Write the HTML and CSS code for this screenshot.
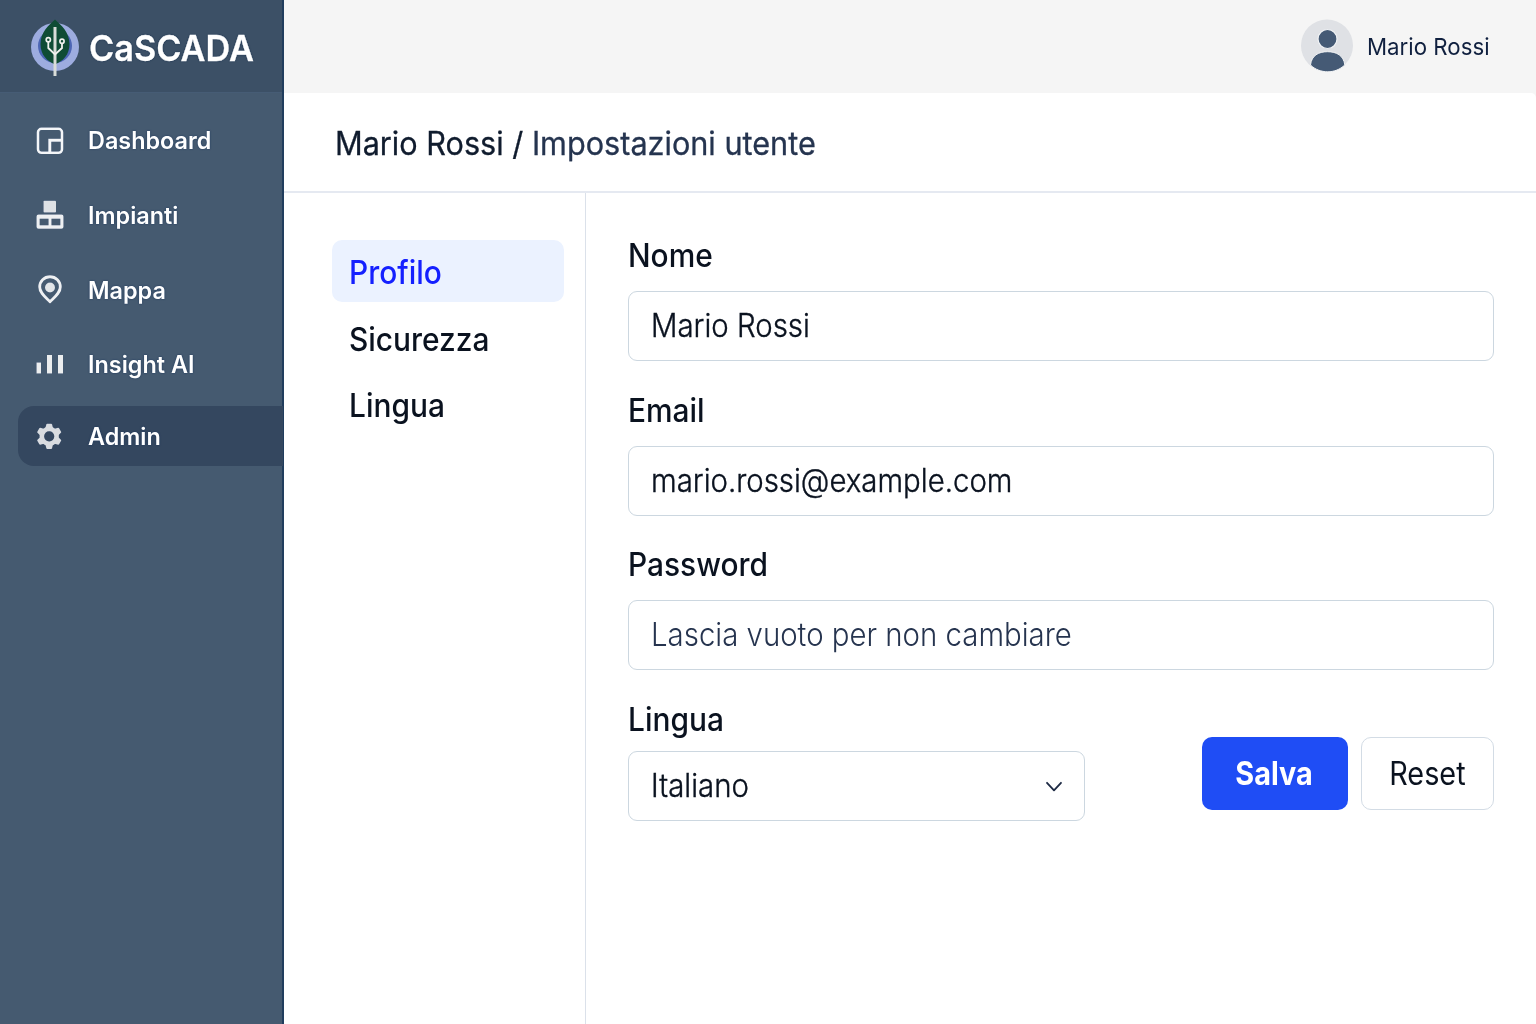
FILE: index.html
```html
<!DOCTYPE html>
<html lang="it">
<head>
<meta charset="utf-8">
<title>CaSCADA - Impostazioni utente</title>
<link rel="stylesheet" href="styles.css">
</head>
<body>
<div class="app">
  <aside class="sidebar">
    <div class="brand">
      <svg class="logo" viewBox="0 0 50 58" width="50" height="58">
        <circle cx="25" cy="28" r="24" fill="#9dacdf"/>
        <circle cx="25" cy="27" r="17" fill="#4d66b5"/>
        <path d="M25 0.500C31 6 39.500 13 39.500 25C39.500 36 33 42 25 45.500C17 42 10.500 36 10.500 25C10.500 13 19 6 25 0.500Z" fill="#0f4c35"/>
        <path d="M25 8V57" stroke="#d9ddd9" stroke-width="3" fill="none"/>
        <path d="M18.300 23V29L25 35.500L32 29V25" stroke="#f0f2ee" stroke-width="1.800" fill="none"/>
        <circle cx="18.300" cy="20.700" r="2.100" stroke="#f0f2ee" stroke-width="1.700" fill="none"/>
        <circle cx="32" cy="22.300" r="2.100" stroke="#f0f2ee" stroke-width="1.700" fill="none"/>
      </svg>
      <span class="brand-name">CaSCADA</span>
    </div>
    <nav class="menu">
      <a class="menu-item">
        <svg class="icon" viewBox="0 0 28 28" width="28" height="28" fill="none" stroke="#f4f6f8">
          <rect x="2" y="1.800" width="24" height="24" rx="3.500" stroke-width="2.600"/>
          <path d="M25 13.300H13.800V25" stroke-width="3"/>
        </svg>
        <span class="menu-text">Dashboard</span>
      </a>
      <a class="menu-item">
        <svg class="icon" viewBox="0 1.200 28 28" width="28" height="28" overflow="visible">
          <rect x="7.500" y="0" width="12.500" height="11.700" rx="0.800" fill="#dfe2e6"/>
          <path d="M2.500 13.700H25.500Q27.500 13.700 27.500 15.700V26Q27.500 28 25.500 28H2.500Q0.500 28 0.500 26V15.700Q0.500 13.700 2.500 13.700ZM3.700 18V24.500H12.500V18ZM15.500 18V24.500H24.300V18Z" fill="#eef0f2" fill-rule="evenodd"/>
        </svg>
        <span class="menu-text">Impianti</span>
      </a>
      <a class="menu-item menu-item--short">
        <svg class="icon" viewBox="0 0 28 28" width="28" height="28" overflow="visible">
          <path d="M14 0.800C20 0.800 24.300 5.300 24.300 11C24.300 17 18.500 21.300 14 25.800C9.500 21.300 3.700 17 3.700 11C3.700 5.300 8 0.800 14 0.800Z" fill="none" stroke="#eef0f2" stroke-width="2.900" stroke-linejoin="round"/>
          <circle cx="14" cy="11.500" r="5" fill="#e2e5e8"/>
        </svg>
        <span class="menu-text">Mappa</span>
      </a>
      <a class="menu-item menu-item--short">
        <svg class="icon" viewBox="0 0 28 28" width="28" height="28" fill="#eceeef">
          <path d="M0.500 12.500H5V23.500H0.500ZM11 5H16V23.500H11ZM22 5H27V23.500H22Z"/>
        </svg>
        <span class="menu-text">Insight AI</span>
      </a>
      <a class="menu-item menu-item--active">
        <svg class="icon" viewBox="0.300 -0.800 28 28" width="28" height="28">
          <g fill="#d9dce0">
            <path id="tooth" d="M9.500 6L10.600 1.600Q10.800 0.900 11.500 0.900H15.500Q16.200 0.900 16.400 1.600L17.500 6Z"/>
            <use href="#tooth" transform="rotate(60 13.500 13.500)"/>
            <use href="#tooth" transform="rotate(120 13.500 13.500)"/>
            <use href="#tooth" transform="rotate(180 13.500 13.500)"/>
            <use href="#tooth" transform="rotate(240 13.500 13.500)"/>
            <use href="#tooth" transform="rotate(300 13.500 13.500)"/>
          </g>
          <circle cx="13.500" cy="13.500" r="7.400" fill="none" stroke="#d9dce0" stroke-width="4.600"/>
        </svg>
        <span class="menu-text">Admin</span>
      </a>
    </nav>
  </aside>

  <div class="main">
    <header class="topbar">
      <svg class="avatar" viewBox="0 0 52 52" width="52" height="53">
        <circle cx="26" cy="26" r="26" fill="#dfe1e5"/>
        <circle cx="26.500" cy="19.500" r="9.500" fill="#455a75" stroke="#f1f3f5" stroke-width="1.200"/>
        <path d="M9.500 45.500C10.500 36 17.500 32.200 26.500 32.200S42.800 36 43.800 45.500C39 50 33 52.300 26.700 52.300S14 50 9.500 45.500Z" fill="#455a75" stroke="#f1f3f5" stroke-width="1"/>
      </svg>
      <span class="user-name">Mario Rossi</span>
    </header>

    <div class="page">
      <div class="breadcrumb"><span class="crumb">Mario Rossi / <span class="crumb-current">Impostazioni utente</span></span></div>
      <div class="columns">
        <nav class="tabs">
          <a class="tab tab--active"><span class="condensed">Profilo</span></a>
          <a class="tab"><span class="condensed">Sicurezza</span></a>
          <a class="tab"><span class="condensed">Lingua</span></a>
        </nav>
        <form class="form">
          <div class="field">
            <div class="label"><span class="condensed">Nome</span></div>
            <div class="control"><span class="value">Mario Rossi</span></div>
          </div>
          <div class="field">
            <div class="label"><span class="condensed">Email</span></div>
            <div class="control"><span class="value">mario.rossi@example.com</span></div>
          </div>
          <div class="field">
            <div class="label"><span class="condensed">Password</span></div>
            <div class="control"><span class="value value--hint">Lascia vuoto per non cambiare</span></div>
          </div>
          <div class="last-row">
            <div class="field field--select">
              <div class="label"><span class="condensed">Lingua</span></div>
              <div class="control control--select">
                <span class="value">Italiano</span>
                <svg viewBox="0 0 18 12" width="18" height="12" fill="none" stroke="#1d2a44" stroke-width="1.800" stroke-linecap="round" stroke-linejoin="round"><path d="M2 2.800L9 10.300L16 2.800"/></svg>
              </div>
            </div>
            <div class="actions">
              <button type="button" class="btn btn--primary"><span>Salva</span></button>
              <button type="button" class="btn btn--plain"><span>Reset</span></button>
            </div>
          </div>
        </form>
      </div>
    </div>
  </div>
</div>
</body>
</html>
```
FILE: styles.css
```css
* { box-sizing: border-box; }

body {
  margin: 0;
  font-family: Inter, "Liberation Sans", sans-serif;
  color: #0a121f;
  background: #f5f5f5;
}

.app { display: flex; height: 1024px; overflow: hidden; }

/* Sidebar */
.sidebar {
  width: 284px;
  flex: none;
  background: #455a70;
  border-right: 2px solid #213d5d;
}

.brand {
  height: 93px;
  display: flex;
  align-items: center;
  padding: 4px 0 0 30px;
  background: #3c5066;
  border-bottom: 1px solid #465c75;
}

.logo { flex: none; }

.brand-name {
  margin-left: 9px;
  font-size: 36px;
  font-weight: 600;
  line-height: 44px;
  color: #fff;
  white-space: nowrap;
  transform: scaleX(0.952);
  transform-origin: left;
  -webkit-text-stroke: 0.3px #fff;
  text-shadow: 0 0 2px #0f2746;
}

.menu { display: flex; flex-direction: column; padding: 10px 0 0 18px; }

.menu-item {
  display: flex;
  align-items: center;
  height: 75px;
  padding-left: 18px;
  margin-right: -1px;
}

.menu-item--short { height: 74px; }

.menu-item--active {
  height: 60px;
  margin-top: 5px;
  background: #34475f;
  border-radius: 16px 0 0 16px;
}

.icon { flex: none; filter: drop-shadow(0 0 0.6px #17325a); }

.menu-text {
  margin-left: 24px;
  font-size: 24px;
  font-weight: 600;
  line-height: 29px;
  color: #fff;
  white-space: nowrap;
  transform: scaleX(0.975);
  transform-origin: left;
  text-shadow: 0 0 2px #17325a;
}

.menu-item--active .menu-text { padding-top: 1px; }

/* Top bar */
.main { flex: 1; min-width: 0; display: flex; flex-direction: column; }

.topbar {
  height: 93px;
  flex: none;
  display: flex;
  align-items: center;
  padding: 0 0 2px 1017px;
  background: #f5f5f5;
}

.avatar { flex: none; }

.user-name {
  margin-left: 14px;
  padding-top: 2px;
  font-size: 23.5px;
  line-height: 30px;
  color: #10203f;
  white-space: nowrap;
  transform: scaleX(0.947);
  transform-origin: left;
}

/* Page */
.page {
  flex: 1;
  display: flex;
  flex-direction: column;
  background: #fff;
  border-top-right-radius: 5px;
}

.breadcrumb {
  height: 100px;
  padding: 31px 0 0 51px;
  border-bottom: 2px solid #e5e9f1;
}

.crumb {
  display: inline-block;
  font-size: 32px;
  line-height: 40px;
  color: #101c2e;
  white-space: nowrap;
  transform: scaleX(0.957);
  transform-origin: left;
  -webkit-text-stroke: 0.3px currentColor;
}

.crumb-current { color: #25344f; }

.columns { flex: 1; display: flex; }

.tabs {
  width: 302px;
  flex: none;
  display: flex;
  flex-direction: column;
  gap: 4.5px;
  padding: 47px 21px 0 48px;
  border-right: 1px solid #dbe1ea;
}

.tab {
  height: 62px;
  padding: 12px 0 0 16.500px;
  border-radius: 10px;
  font-size: 32px;
  font-weight: 500;
  line-height: 41px;
}

.tab--active { background: #ebf2ff; color: #1420ff; }

.condensed {
  display: inline-block;
  white-space: nowrap;
  transform: scaleX(0.934);
  transform-origin: left;
}

.form { flex: 1; padding: 43px 42px 0 42px; }

.field { margin-bottom: 29.500px; }

.label {
  height: 55px;
  font-size: 32px;
  font-weight: 500;
  line-height: 40px;
}

.control {
  height: 70px;
  display: flex;
  align-items: center;
  padding-left: 21.500px;
  border: 1px solid #ccd7e0;
  border-radius: 9px;
}

.value {
  font-size: 32px;
  font-weight: 300;
  line-height: 40px;
  white-space: nowrap;
  transform: scaleX(0.918);
  transform-origin: left;
  -webkit-text-stroke: 0.4px currentColor;
}

.value--hint { color: #26344f; -webkit-text-stroke-width: 0; }

.last-row { display: flex; justify-content: space-between; }

.field--select { width: 457px; }
.field--select .label { height: 51px; }
.control--select { justify-content: space-between; padding-right: 21px; }

.actions { display: flex; gap: 13px; padding-top: 37px; }

.btn {
  height: 73px;
  padding: 0;
  border-radius: 10px;
  font-family: inherit;
  font-size: 32px;
}

.btn span { display: inline-block; transform: scaleX(0.9); }

.btn--primary { width: 146px; padding-right: 2px; border: 0; background: #1f4df5; color: #fff; font-weight: 650; }
.btn--plain { width: 133px; border: 1px solid #d3dce5; background: #fff; color: #0a121f; font-weight: 400; }
```
